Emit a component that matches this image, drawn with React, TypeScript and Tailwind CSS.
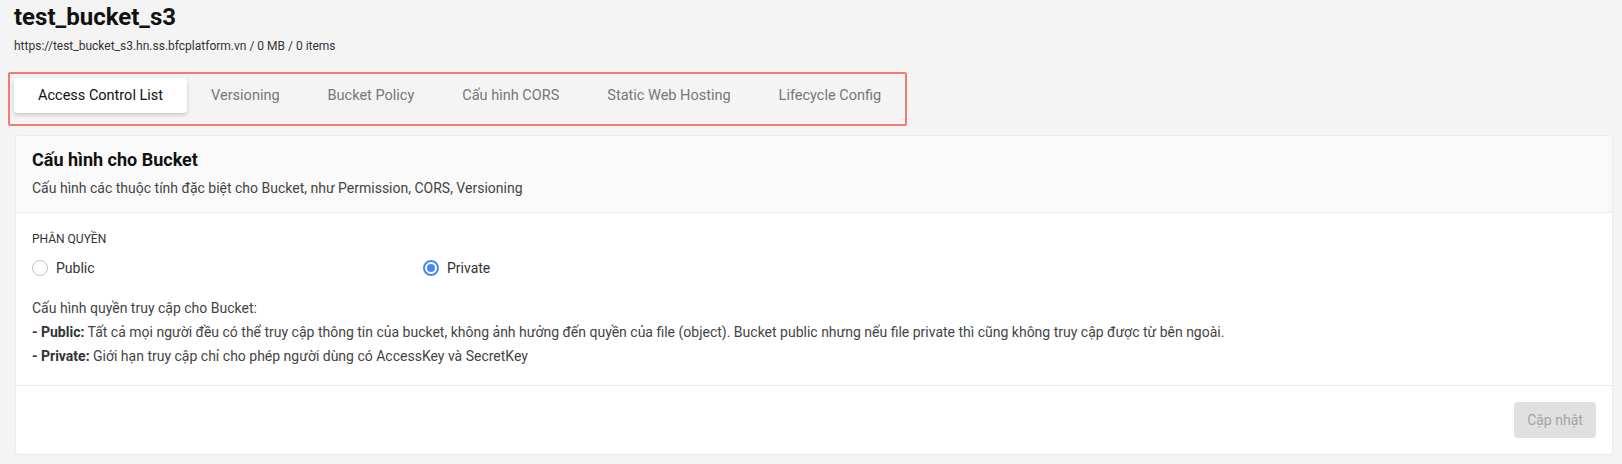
import { useState } from 'react';

const tabs = [
  'Access Control List',
  'Versioning',
  'Bucket Policy',
  'Cấu hình CORS',
  'Static Web Hosting',
  'Lifecycle Config',
];

function Radio({ label, checked, onClick }: { label: string; checked: boolean; onClick: () => void }) {
  return (
    <label className="flex items-center cursor-pointer" onClick={onClick}>
      {checked ? (
        <span className="flex h-4 w-4 items-center justify-center rounded-full border-2 border-[#4a86f7]">
          <span className="h-2 w-2 rounded-full bg-[#4a86f7]" />
        </span>
      ) : (
        <span className="h-4 w-4 rounded-full border border-[#c4c4c4] bg-white" />
      )}
      <span className="ml-2 text-sm leading-5 text-[#333]">{label}</span>
    </label>
  );
}

export default function App() {
  const [activeTab, setActiveTab] = useState(0);
  const [access, setAccess] = useState<'public' | 'private'>('private');

  return (
    <div className="min-h-screen bg-[#f4f4f4] pl-[14px] pr-[9px] pt-[2px] font-['Roboto',sans-serif]">
      {/* Header */}
      <h1 className="text-2xl font-bold leading-[30px] text-[#111]">test_bucket_s3</h1>
      <p className="mt-[6px] text-xs leading-4 text-[#333]">
        https://test_bucket_s3.hn.ss.bfcplatform.vn / 0 MB / 0 items
      </p>

      {/* Tabs */}
      <div className="-ml-1.5 mt-[18px] inline-flex rounded-[2px] border-2 border-[#f17d72] pl-1 pt-1 pb-[11px]">
        {tabs.map((tab, i) => (
          <button
            key={tab}
            onClick={() => setActiveTab(i)}
            className={`h-[35px] rounded px-6 text-[14.5px] ${
              activeTab === i
                ? 'bg-white text-[#111] shadow-[0_2px_4px_rgba(0,0,0,0.18)]'
                : 'text-[#777]'
            }`}
          >
            {tab}
          </button>
        ))}
      </div>

      {/* Card */}
      <div className="ml-px mt-[9px] rounded border border-[#ebebeb] bg-white">
        <div className="rounded-t border-b border-[#ebebeb] bg-[#fafafa] px-4 pt-[13px] pb-[14px]">
          <h2 className="text-lg font-bold leading-[22px] text-[#111]">Cấu hình cho Bucket</h2>
          <p className="mt-[7px] text-sm leading-5 text-[#444]">
            Cấu hình các thuộc tính đặc biệt cho Bucket, như Permission, CORS, Versioning
          </p>
        </div>

        <div className="border-b border-[#ebebeb] px-4 pt-[18px] pb-[17px]">
          <div className="text-xs leading-4 text-[#333]">PHÂN QUYỀN</div>
          <div className="mt-[11px] grid grid-cols-4">
            <Radio label="Public" checked={access === 'public'} onClick={() => setAccess('public')} />
            <Radio label="Private" checked={access === 'private'} onClick={() => setAccess('private')} />
          </div>
          <div className="mt-[18px] text-sm leading-6 text-[#444]">
            <p>Cấu hình quyền truy cập cho Bucket:</p>
            <p>
              <span className="font-bold text-[#333]">- Public:</span> Tất cả mọi người đều có thể truy cập thông tin
              của bucket, không ảnh hưởng đến quyền của file (object). Bucket public nhưng nếu file private thì cũng
              không truy cập được từ bên ngoài.
            </p>
            <p>
              <span className="font-bold text-[#333]">- Private:</span> Giới hạn truy cập chỉ cho phép người dùng có
              AccessKey và SecretKey
            </p>
          </div>
        </div>

        <div className="flex justify-end px-4 py-4">
          <button
            disabled
            className="h-9 w-[82px] cursor-not-allowed rounded bg-[#e0e0e0] text-sm text-[#a3a3a3]"
          >
            Cập nhật
          </button>
        </div>
      </div>
    </div>
  );
}
